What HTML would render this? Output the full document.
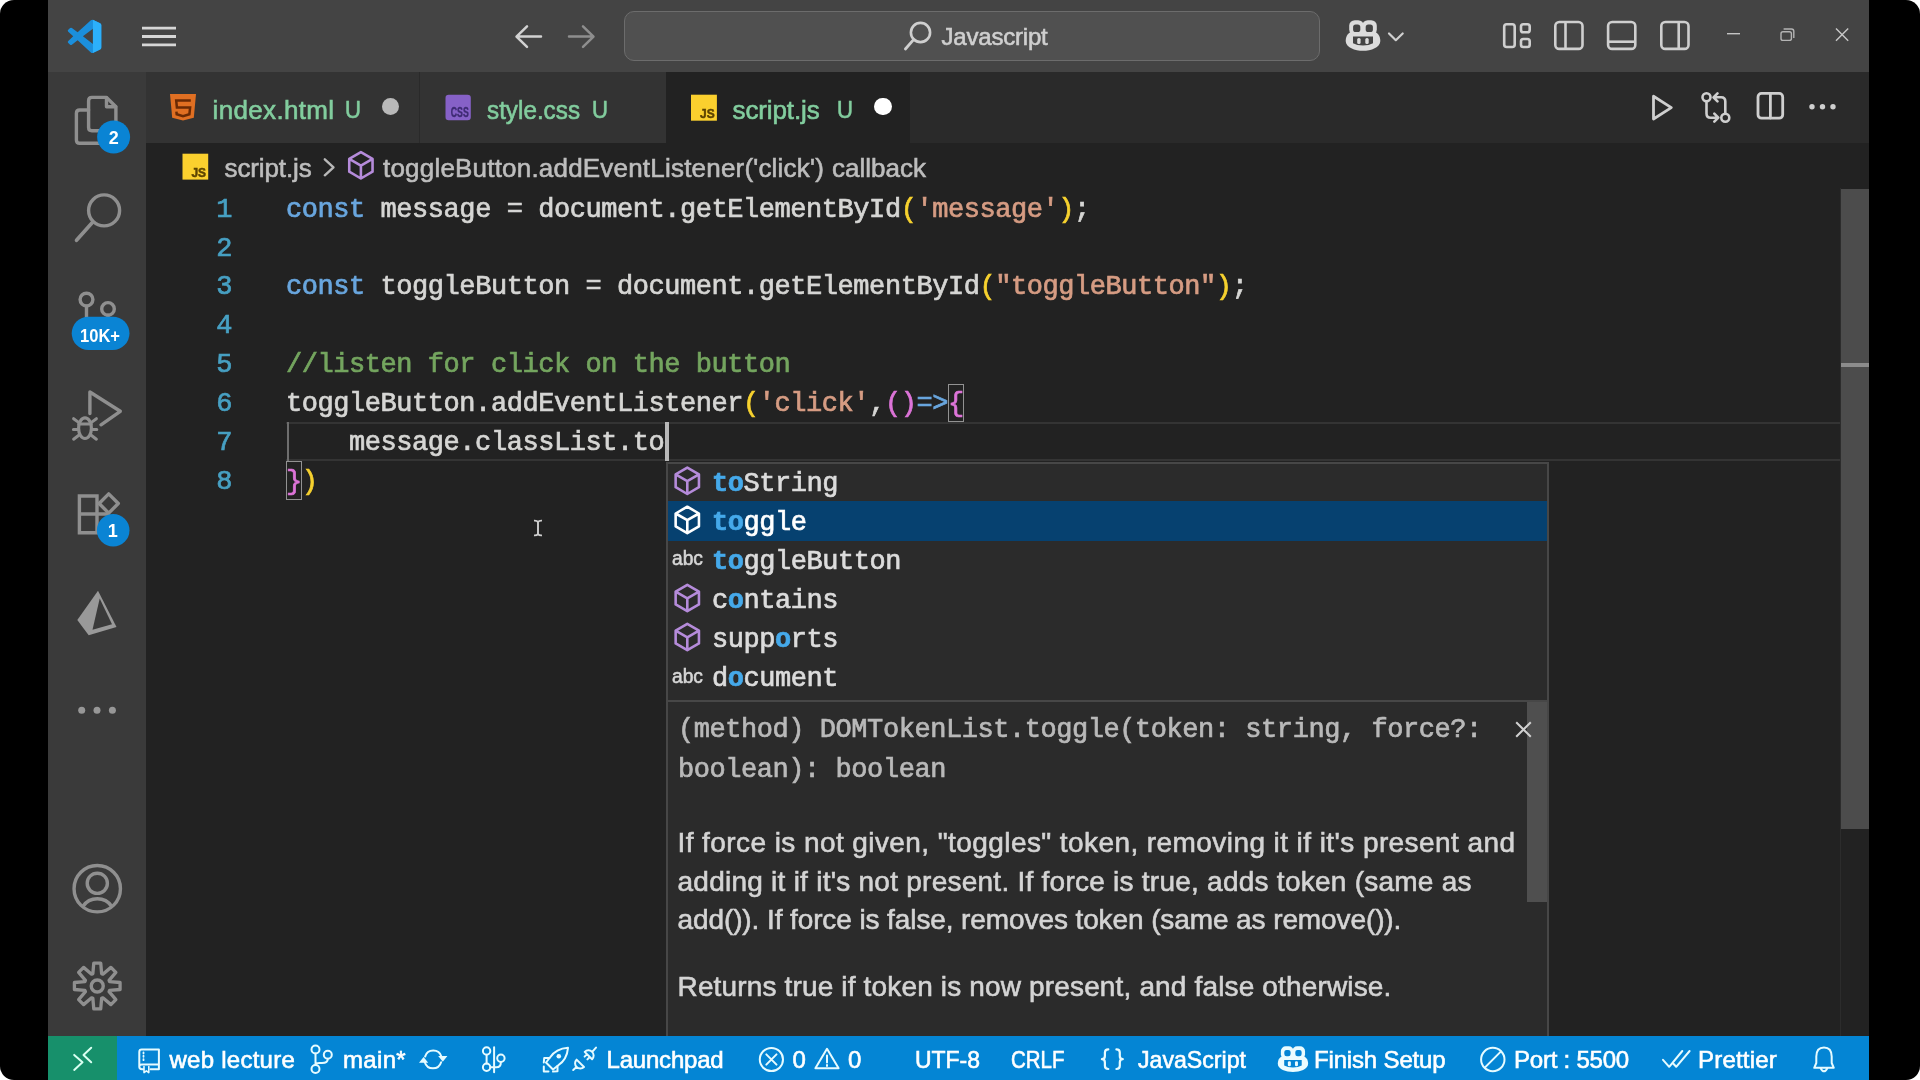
<!DOCTYPE html>
<html>
<head>
<meta charset="utf-8">
<style>
*{box-sizing:border-box;margin:0;padding:0}
html,body{width:1920px;height:1080px;overflow:hidden;background:#fff}
body{font-family:"Liberation Sans",sans-serif;position:relative}
.abs{position:absolute}
#frame{position:absolute;left:0;top:0;width:1920px;height:1080px;background:#000;border-radius:14px;overflow:hidden}
#win{position:absolute;left:48px;top:0;width:1821px;height:1080px;background:#222222;overflow:hidden}
/* all children of #win are positioned in page coords via #pg */
#pg{position:absolute;left:-48px;top:0;width:1920px;height:1080px;will-change:transform}
#title{left:48px;top:0;width:1821px;height:72px;background:#444444}
#act{left:48px;top:72px;width:98px;height:964px;background:#3a3a3a}
#tabs{left:146px;top:72px;width:1723px;height:71px;background:#2a2a2a}
.tab{position:absolute;top:72px;height:71px;background:#333333}
.tab.active{background:#222222}
.t{position:absolute;white-space:pre;line-height:1;transform-origin:0 50%;-webkit-text-stroke:0.6px currentColor}
.tl{font-size:26px;color:#82cd9e}
.bc{font-size:26px;color:#bdbdbd}
#status{left:48px;top:1036px;width:1821px;height:44px;background:#0485d4}
#remote{left:48px;top:1036px;width:69px;height:44px;background:#17906b}
.st{top:1048.4px;font-size:24px;color:#fff}
.code,.ln,.sg,.dm{position:absolute;white-space:pre;font-family:"Liberation Mono",monospace;font-size:27px;line-height:1;letter-spacing:-0.443px}
.code,.ln,.sg,.dm{-webkit-text-stroke:0.7px currentColor}
.code{color:#d6d6d4;left:286px}
.ln{color:#47a0c3;left:200px;width:32px;text-align:right}
.sg{color:#dcdcdc;left:712px}
.sg b{color:#45a9ea;font-weight:700}
.dm{color:#b9b9b9;left:678px}
.doc{left:677.5px;font-size:28px;color:#d4d4d4}
.k{color:#69a6de}.s{color:#d69c83}.c{color:#74a55f}.y{color:#f7d22f}.p{color:#dd74d8}
svg{position:absolute;overflow:visible}
</style>
</head>
<body>
<div id="frame">
<div id="win"><div id="pg">

<!-- TITLE BAR -->
<div id="title" class="abs"></div>
<div class="abs" style="left:623.6px;top:11.2px;width:696.4px;height:49.6px;background:#505050;border:1.6px solid #6c6c6c;border-radius:10px"></div>
<div class="t tt" style="left:941.5px;top:25.3px;font-size:24px;color:#cfcfcf;letter-spacing:-0.2px">Javascript</div>

<!-- ACTIVITY BAR -->
<div id="act" class="abs"></div>

<!-- TABS -->
<div id="tabs" class="abs"></div>
<div class="tab" style="left:146px;width:273px"></div>
<div class="tab" style="left:420px;width:246px"></div>
<div class="tab active" style="left:666px;width:244px"></div>
<div class="t tl" style="left:212.6px;top:96.7px;letter-spacing:0.33px">index.html</div>
<div class="t tl" style="left:345px;top:98.4px;font-size:24px;transform:scaleX(.92)">U</div>
<div class="abs" style="left:381.7px;top:98px;width:17.4px;height:17.4px;border-radius:50%;background:#b9b9b9"></div>
<div class="t tl" style="left:487px;top:96.7px;transform:scaleX(.933)">style.css</div>
<div class="t tl" style="left:591.5px;top:98.4px;font-size:24px;transform:scaleX(.92)">U</div>
<div class="t tl" style="left:732.5px;top:96.7px;letter-spacing:-0.12px">script.js</div>
<div class="t tl" style="left:837px;top:98.4px;font-size:24px;transform:scaleX(.92)">U</div>
<div class="abs" style="left:874px;top:97.7px;width:17.8px;height:17.8px;border-radius:50%;background:#ffffff"></div>

<!-- BREADCRUMBS -->
<div class="t bc" style="left:224.5px;top:155px;letter-spacing:-0.12px">script.js</div>
<div class="t bc" style="left:383px;top:155px;letter-spacing:0.2px">toggleButton.addEventListener('click')</div>
<div class="t bc" style="left:832px;top:155px">callback</div>

<!-- EDITOR -->
<div id="editor">
<!-- current line -->
<div class="abs" style="left:286px;top:422.4px;width:1555px;height:38.9px;border-top:2.5px solid #343434;border-bottom:2.5px solid #343434"></div>
<div class="abs" style="left:286.5px;top:422.4px;width:2px;height:38.9px;background:#6e6e6e"></div>
<!-- bracket match boxes -->
<div class="abs" style="left:947.8px;top:383.5px;width:16.4px;height:38.9px;border:1.8px solid #929292"></div>
<div class="abs" style="left:286px;top:461.3px;width:16.2px;height:38.9px;border:1.8px solid #929292"></div>
<div class="ln" style="top:196.6px">1</div>
<div class="ln" style="top:235.5px">2</div>
<div class="ln" style="top:274.4px">3</div>
<div class="ln" style="top:313.3px">4</div>
<div class="ln" style="top:352.2px">5</div>
<div class="ln" style="top:391.1px">6</div>
<div class="ln" style="top:430px">7</div>
<div class="ln" style="top:468.9px">8</div>
<div class="code" style="top:196.6px"><span class="k">const</span> message = document.getElementById<span class="y">(</span><span class="s">'message'</span><span class="y">)</span>;</div>
<div class="code" style="top:274.4px"><span class="k">const</span> toggleButton = document.getElementById<span class="y">(</span><span class="s">"toggleButton"</span><span class="y">)</span>;</div>
<div class="code" style="top:352.2px"><span class="c">//listen for click on the button</span></div>
<div class="code" style="top:391.1px">toggleButton.addEventListener<span class="y">(</span><span class="s">'click'</span>,<span class="p">()</span><span class="k">=&gt;</span><span class="p">{</span></div>
<div class="code" style="top:430px">    message.classList.to</div>
<div class="code" style="top:468.9px"><span class="p">}</span><span class="y">)</span></div>
<!-- text cursor -->
<div class="abs" style="left:665.3px;top:422px;width:4.2px;height:39px;background:#b8b8b8"></div>
<!-- scrollbar -->
<div class="abs" style="left:1840px;top:188px;width:1px;height:848px;background:#2c2c2c"></div>
<div class="abs" style="left:1840.5px;top:188.7px;width:28.5px;height:640.5px;background:#4c4c4c"></div>
<div class="abs" style="left:1841px;top:363px;width:28px;height:3.8px;background:#8c8c8c"></div>
<!-- mouse I-beam -->
<svg style="left:533px;top:519px" width="10" height="18" viewBox="0 0 10 18"><path d="M1 1.6 Q4 1.4 5 3 Q6 1.4 9 1.6 M1 16.4 Q4 16.6 5 15 Q6 16.6 9 16.4 M5 2.5 V15.5" stroke="#cfcfcf" stroke-width="1.9" fill="none"/></svg>
</div>

<!-- SUGGEST -->
<div id="suggest">
<div class="abs" style="left:665.6px;top:461.6px;width:883px;height:580px;background:#2b2b2b;border:2px solid #474747"></div>
<div class="abs" style="left:667.6px;top:501.3px;width:879px;height:39.3px;background:#064170"></div>
<div class="abs" style="left:667.6px;top:699.6px;width:879px;height:2px;background:#474747"></div>
<div class="sg" style="top:470.6px"><b>to</b>String</div>
<div class="sg" style="top:509.8px;color:#fff"><b>to</b>ggle</div>
<div class="sg" style="top:548.8px"><b>to</b>ggleButton</div>
<div class="sg" style="top:588.0px">c<b>o</b>ntains</div>
<div class="sg" style="top:626.8px">supp<b>o</b>rts</div>
<div class="sg" style="top:666.3px">d<b>o</b>cument</div>
<div class="t" style="left:671.5px;top:665.8px;font-size:20px;color:#d6d6d6;transform:scaleX(.96)">abc</div>
<div class="t" style="left:671.5px;top:548.3px;font-size:20px;color:#d6d6d6;transform:scaleX(.96)">abc</div>
<!-- details -->
<div class="dm" style="top:717.2px">(method) DOMTokenList.toggle(token: string, force?:</div>
<div class="dm" style="top:756.5px">boolean): boolean</div>
<div class="t doc" style="top:829.2px;letter-spacing:0.42px">If force is not given, "toggles" token, removing it if it's present and</div>
<div class="t doc" style="top:867.5px;letter-spacing:0.25px">adding it if it's not present. If force is true, adds token (same as</div>
<div class="t doc" style="top:905.9px;letter-spacing:-0.1px">add()). If force is false, removes token (same as remove()).</div>
<div class="t doc" style="top:973px;letter-spacing:0.155px">Returns true if token is now present, and false otherwise.</div>
<div class="abs" style="left:1527px;top:701.6px;width:19.6px;height:200px;background:#4f4f4f"></div>
<svg style="left:1514.5px;top:720.5px" width="17" height="17" viewBox="0 0 17 17"><path d="M1.2 1.2 L15.8 15.8 M15.8 1.2 L1.2 15.8" stroke="#d0d0d0" stroke-width="2" fill="none"/></svg>
</div>


<!-- ICONS LAYER 1: title / tabs / breadcrumbs -->
<svg id="ic1" style="left:0;top:0" width="1920" height="1080" viewBox="0 0 1920 1080" fill="none">
<!-- vscode logo -->
<g transform="translate(67.8,19.6) scale(1.396)">
<path fill="#1b8fdc" d="M23.15 2.587L18.21.21a1.494 1.494 0 0 0-1.705.29l-9.46 8.63-4.12-3.128a.999.999 0 0 0-1.276.057L.327 7.261A1 1 0 0 0 .326 8.74L3.899 12 .326 15.26a1 1 0 0 0 .001 1.479L1.65 17.94a.999.999 0 0 0 1.276.057l4.12-3.128 9.46 8.63a1.492 1.492 0 0 0 1.704.29l4.942-2.377A1.5 1.5 0 0 0 24 20.06V3.939a1.5 1.5 0 0 0-.85-1.352zm-5.146 14.861L10.826 12l7.178-5.448v10.896z"/>
<path fill="#2cb0fb" d="M18.004 .12 L23.15 2.587 A1.5 1.5 0 0 1 24 3.939 V20.06 A1.5 1.5 0 0 1 23.15 21.413 L18.004 23.88 Z"/>
</g>
<!-- hamburger -->
<path d="M142 28.2H176M142 36.5H176M142 44.8H176" stroke="#d6d6d6" stroke-width="2.8"/>
<!-- back / forward -->
<path d="M541 36.6H517M527 26.3L516.5 36.6L527 46.9" stroke="#d2d2d2" stroke-width="2.5" stroke-linejoin="round" stroke-linecap="round"/>
<path d="M569 36.6H593M583 26.3L593.5 36.6L583 46.9" stroke="#8e8e8e" stroke-width="2.5" stroke-linejoin="round" stroke-linecap="round"/>
<!-- search in command center -->
<circle cx="920.5" cy="32.5" r="9.6" stroke="#cfcfcf" stroke-width="2.6"/>
<path d="M913.6 39.6L905.4 49" stroke="#cfcfcf" stroke-width="2.8" stroke-linecap="round"/>
<!-- copilot (title) -->
<g>
<path fill="#dcdcdc" d="M1345.700 41C1345.700 35.500 1349 32.700 1351.500 31.600L1374.500 31.600C1377 32.700 1380.300 35.500 1380.300 41C1380.300 47.500 1371 50.800 1363 50.800C1355 50.800 1345.700 47.500 1345.700 41Z"/>
<rect x="1349.200" y="20.200" width="14.600" height="15" rx="5.600" fill="#dcdcdc"/>
<rect x="1362.200" y="20.200" width="14.600" height="15" rx="5.600" fill="#dcdcdc"/>
<rect x="1353.100" y="24.500" width="7.200" height="7.600" rx="2.600" fill="#444444"/>
<rect x="1365.700" y="24.500" width="7.200" height="7.600" rx="2.600" fill="#444444"/>
<path fill="#444444" d="M1353 36.600H1373V43.200Q1369 45.400 1363 45.400Q1357 45.400 1353 43.200Z"/>
<rect x="1357.200" y="38" width="3.400" height="6" rx="1.500" fill="#dcdcdc"/>
<rect x="1365.300" y="38" width="3.400" height="6" rx="1.500" fill="#dcdcdc"/>
</g>
<path d="M1389 33.5L1395.800 40.200L1402.700 33.500" stroke="#d0d0d0" stroke-width="2.200" stroke-linecap="round" stroke-linejoin="round"/>
<!-- layout icons -->
<g stroke="#cfcfcf" stroke-width="2.600">
<rect x="1504.200" y="24.200" width="10.500" height="22.800" rx="2.500"/>
<rect x="1521" y="24.200" width="8.700" height="8" rx="2.300"/>
<rect x="1521" y="39" width="8.700" height="8" rx="2.300"/>
<rect x="1555.300" y="22" width="27.200" height="26.900" rx="4"/><path d="M1565.500 22V49"/>
<rect x="1608.100" y="22" width="27.200" height="26.900" rx="4"/><path d="M1608 41.700H1635.500"/>
<rect x="1661.300" y="22" width="27.200" height="26.900" rx="4"/><path d="M1678.700 22V49"/>
</g>
<!-- window controls -->
<path d="M1727 33.700H1740" stroke="#c4c4c4" stroke-width="1.400"/>
<rect x="1781" y="31.800" width="10.400" height="8.600" rx="2" stroke="#b4b4b4" stroke-width="1.400"/>
<path d="M1783.600 29H1791.500Q1793.800 29 1793.800 31.300V38" stroke="#b4b4b4" stroke-width="1.400"/>
<path d="M1836 28.400L1848.200 40.800M1848.200 28.400L1836 40.800" stroke="#c8c8c8" stroke-width="1.400"/>

<!-- file icons: html -->
<g id="i-html">
<path fill="#e06f22" d="M170 94H196L193.800 117.800L183 120.400L172.200 117.800Z"/>
<path d="M190.800 100.600H176.200L176.900 107.600H190.100L189.400 114.300L183 116.200L176.700 114.300L176.400 111.600" stroke="#6a2a04" stroke-width="2.500" fill="none"/>
</g>
<!-- css -->
<rect x="445.500" y="94.800" width="25.300" height="25.400" rx="3.200" fill="#8661c7"/>
<text x="450.800" y="117.400" font-family="Liberation Sans" font-weight="700" font-size="14.500" textLength="18" lengthAdjust="spacingAndGlyphs" fill="#3d2a72" stroke="#3d2a72" stroke-width=".4">CSS</text>
<!-- js (tab) -->
<rect x="691" y="94.700" width="25.900" height="26" fill="#fbd02e"/>
<text x="700" y="117.900" font-family="Liberation Sans" font-weight="700" font-size="13.400" textLength="14.600" lengthAdjust="spacingAndGlyphs" fill="#5c4300" stroke="#5c4300" stroke-width=".5">JS</text>
<!-- js (breadcrumb) -->
<rect x="182.500" y="153.700" width="25.700" height="25.900" fill="#fbd02e"/>
<text x="191.400" y="176.700" font-family="Liberation Sans" font-weight="700" font-size="13.400" textLength="14.600" lengthAdjust="spacingAndGlyphs" fill="#5c4300" stroke="#5c4300" stroke-width=".5">JS</text>
<!-- breadcrumb chevron -->
<path d="M324.800 159.300L333.500 167.300L324.800 175.300" stroke="#b8b8b8" stroke-width="2.400" stroke-linecap="round" stroke-linejoin="round"/>
<!-- cube symbol def -->
<defs><g id="cube"><path d="M0 -13.200L11.650 -6.400V6.400L0 13.200L-11.650 6.400V-6.400ZM-11.650 -6.400L0 .300L11.650 -6.400M0 .300V13.200" stroke-width="2.600" stroke-linejoin="round" fill="none"/></g></defs>
<use href="#cube" x="360.900" y="165.300" stroke="#b58bda"/>
<!-- editor actions -->
<path d="M1653.500 96.300V119L1671.300 107.600Z" stroke="#cfcfcf" stroke-width="2.800" stroke-linejoin="round"/>
<g stroke="#cfcfcf" stroke-width="2.600" stroke-linecap="round" stroke-linejoin="round">
<circle cx="1706.500" cy="97.300" r="4"/><circle cx="1725.300" cy="117.700" r="4"/>
<path d="M1706.500 101.500V113.500Q1706.500 117.700 1710.700 117.700H1717.500M1714.300 113.700L1718.300 117.700L1714.300 121.700"/>
<path d="M1725.300 113.500V101.500Q1725.300 97.300 1721.100 97.300H1714.300M1717.500 93.300L1713.500 97.300L1717.500 101.300"/>
<rect x="1758" y="93.400" width="24.700" height="24.800" rx="3.500" stroke-width="2.800"/><path d="M1770.400 93.500V118" stroke-width="2.800"/>
</g>
<g fill="#cfcfcf"><circle cx="1812" cy="106.700" r="2.700"/><circle cx="1822.500" cy="106.700" r="2.700"/><circle cx="1833" cy="106.700" r="2.700"/></g>
</svg>


<!-- ICONS LAYER 2: activity bar -->
<svg id="ic2" style="left:0;top:0" width="1920" height="1080" viewBox="0 0 1920 1080" fill="none">
<g stroke="#8f8f8f" stroke-width="3.400" stroke-linejoin="round" stroke-linecap="round">
<!-- files -->
<path d="M88.600 127.500V100.700Q88.600 97.400 91.900 97.400H106.500L115.900 106.800V127.500Q115.900 130.700 112.600 130.700H91.900Q88.600 130.700 88.600 127.500Z"/>
<path d="M106.500 97.600V106.800H115.700"/>
<path d="M88.600 110H79.700Q76.400 110 76.400 113.300V140Q76.400 143.300 79.700 143.300H101"/>
<!-- search -->
<circle cx="104.100" cy="210.400" r="15.500"/>
<path d="M92.800 222L76.500 240.300" stroke-width="3.600"/>
<!-- source control -->
<circle cx="86.500" cy="299.600" r="6.400"/><circle cx="108" cy="308.900" r="6.300"/>
<path d="M86.500 306.200V320M108 315.300V320"/>
<!-- run and debug -->
<path d="M89.900 413.500V392L120.300 411.300L101 424.800"/>
<ellipse cx="85" cy="428.200" rx="6.400" ry="10.300" stroke-width="3.200"/>
<path d="M78.800 424H91.200M73.400 429.600H78M92 429.600H96.800M73.600 418.700L78.600 422.400M96.400 418.700L91.400 422.400M73.600 439.200L78.800 435.200M96.400 439.200L91.200 435.200" stroke-width="3"/>
<!-- extensions -->
<path d="M79.400 496H97V532.800H79.400ZM79.400 514H108.500M97 532.800H104" stroke-linejoin="miter"/>
<path d="M108.700 493.900L118.300 503.500L108.700 513.100L99.100 503.500Z"/>
</g>
<!-- prisma pyramid -->
<path d="M98 590.700L77.300 620L88.700 635.200L116.500 627Z" fill="#999"/>
<path d="M99.700 598.500L112 624.200L92.500 629.800Z" fill="#3a3a3a"/>
<!-- ellipsis -->
<g fill="#979797"><circle cx="81.700" cy="710.200" r="3.500"/><circle cx="97" cy="710.200" r="3.500"/><circle cx="112.400" cy="710.200" r="3.500"/></g>
<!-- account -->
<g stroke="#8f8f8f" stroke-width="3.400">
<circle cx="97.250" cy="888.700" r="23.200"/>
<circle cx="97.300" cy="883.300" r="10.100"/>
<path d="M82.800 906.500A17.500 17.500 0 0 1 111.800 906.500"/>
</g>
<!-- gear -->
<path d="M92.88 973.65L93.76 963.17L100.74 963.17L101.62 973.65L102.89 974.18L110.93 967.38L115.87 972.32L109.07 980.36L109.60 981.63L120.08 982.51L120.08 989.49L109.60 990.37L109.07 991.64L115.87 999.68L110.93 1004.62L102.89 997.82L101.62 998.35L100.74 1008.83L93.76 1008.83L92.88 998.35L91.61 997.82L83.57 1004.62L78.63 999.68L85.43 991.64L84.90 990.37L74.42 989.49L74.42 982.51L84.90 981.63L85.43 980.36L78.63 972.32L83.57 967.38L91.61 974.18Z" stroke="#8f8f8f" stroke-width="3.300" stroke-linejoin="round"/>
<circle cx="97.250" cy="986" r="6" stroke="#8f8f8f" stroke-width="3.400"/>
<!-- badges -->
<circle cx="113.600" cy="137" r="16.500" fill="#0a84d4"/>
<rect x="71.700" y="316.700" width="57.800" height="33.300" rx="16.650" fill="#0a84d4"/>
<circle cx="113.200" cy="530.200" r="16.300" fill="#0a84d4"/>
<g font-family="Liberation Sans" font-weight="700" font-size="18" fill="#fff">
<text x="108.700" y="143.700">2</text>
<text x="80" y="341.600" textLength="40" lengthAdjust="spacingAndGlyphs">10K+</text>
<text x="107.800" y="536.600">1</text>
</g>
</svg>

<!-- STATUS BAR -->
<div id="status" class="abs"></div>
<div id="remote" class="abs"></div>
<div class="t st" style="left:169.5px;letter-spacing:0.25px">web lecture</div>
<div class="t st" style="left:343px;letter-spacing:0.33px">main*</div>
<div class="t st" style="left:606.5px;letter-spacing:-0.2px">Launchpad</div>
<div class="t st" style="left:792.5px">0</div>
<div class="t st" style="left:848px">0</div>
<div class="t st" style="left:914.5px;transform:scaleX(.956)">UTF-8</div>
<div class="t st" style="left:1010.5px;transform:scaleX(.853)">CRLF</div>
<div class="t st" style="left:1138px;transform:scaleX(.964)">JavaScript</div>
<div class="t st" style="left:1314px;letter-spacing:-0.16px">Finish Setup</div>
<div class="t st" style="left:1514px;letter-spacing:-0.22px">Port : 5500</div>
<div class="t st" style="left:1698px;letter-spacing:0.2px">Prettier</div>


<!-- ICONS LAYER 3: suggest + status -->
<svg id="ic3" style="left:0;top:0" width="1920" height="1080" viewBox="0 0 1920 1080" fill="none">
<use href="#cube" x="687.300" y="480.800" stroke="#b58bda"/>
<use href="#cube" x="687.300" y="519.900" stroke="#ffffff"/>
<use href="#cube" x="687.300" y="598" stroke="#b58bda"/>
<use href="#cube" x="687.300" y="637" stroke="#b58bda"/>
<g stroke="#e6fbff" stroke-width="2" stroke-linecap="round" stroke-linejoin="round">
<!-- remote -->
<path d="M91.200 1047.700L83.500 1054.900L91.200 1062.200M74.200 1054.900L82.500 1062.300L74.200 1069.900" stroke="#d9fff1"/>
<!-- repo -->
<path d="M139.300 1067V1052Q139.300 1049.600 141.700 1049.600H158.900V1069.200H150.500M143.300 1069.200H142Q139.300 1069.200 139.300 1066.800Q139.300 1064.600 142 1064.600H158.500"/>
<path d="M144 1066.500V1072.600L146.400 1070.800L148.800 1072.600V1066.500" stroke-width="1.600"/>
<path d="M143.500 1052.300V1053.400M143.500 1055.700V1056.800M143.500 1059.100V1060.200" stroke-width="1.800"/>
<!-- branch -->
<circle cx="315.500" cy="1049.500" r="4"/><circle cx="315.500" cy="1069" r="4"/><circle cx="327.800" cy="1054.800" r="4"/>
<path d="M315.500 1053.500V1065M327.800 1058.800Q327.800 1063 322 1063H319.500Q315.500 1063 315.500 1065"/>
<!-- sync -->
<path d="M425.100 1056.600A8.500 8.500 0 0 1 441.400 1056.600M441.100 1062.200A8.500 8.500 0 0 1 424.800 1062.200"/>
<path d="M438.200 1056.100H447.400L442.800 1061.800ZM419 1062.700H428.200L423.600 1057Z" fill="#e6fbff" stroke="none"/>
<!-- git graph -->
<circle cx="486.600" cy="1051" r="3.700"/><circle cx="486.600" cy="1067.300" r="3.700"/><circle cx="500.900" cy="1058.200" r="3.700"/>
<path d="M486.600 1054.700V1063.600M494.100 1047.300V1072.300M490.300 1067.300H496.500Q500.900 1067.300 500.900 1062"/>
<!-- rocket -->
<path d="M568 1047.800Q556 1048.500 550 1057.500L546 1062.500L553 1069.500L558 1065.500Q567 1059.500 568 1047.800Z"/>
<path d="M549.500 1058H544.200L543.800 1062.500M557.500 1066V1071.200L553 1071.600M543.800 1066.500V1071.600H548.500"/>
<circle cx="558.800" cy="1056.200" r="2.300" fill="#e6fbff" stroke="none"/>
<!-- plug -->
<path d="M584.700 1051.900L592.100 1059.300A5.230 5.230 0 0 0 584.700 1051.900ZM592.200 1051.800L596 1047.600M586.800 1054.400L584.600 1056.600M589.600 1057.200L587.400 1059.400"/>
<path d="M576.600 1059.600L584 1067A5.230 5.230 0 0 1 576.600 1059.600ZM576.500 1067.100L573.200 1070"/>
<!-- error / warning -->
<circle cx="771.400" cy="1059.500" r="11.600"/><path d="M766.300 1054.400L776.500 1064.600M776.500 1054.400L766.300 1064.600"/>
<path d="M827 1048.800L838.600 1068.200H815.400Z"/><path d="M827 1055.600V1062.400M827 1064.900V1065.900"/>
<!-- braces -->
<path d="M1108.300 1049.400Q1104.900 1049.400 1104.900 1052.600V1056Q1104.900 1059.200 1101.900 1059.200Q1104.900 1059.200 1104.900 1062.400V1065.800Q1104.900 1069 1108.300 1069M1116.400 1049.400Q1119.800 1049.400 1119.800 1052.600V1056Q1119.800 1059.200 1122.800 1059.200Q1119.800 1059.200 1119.800 1062.400V1065.800Q1119.800 1069 1116.400 1069" stroke-width="2.200"/>
<!-- port -->
<circle cx="1492.800" cy="1059.500" r="11.700"/><path d="M1501 1051.400L1484.800 1067.600"/>
<!-- checks -->
<path d="M1663 1059.800L1669.200 1066.800L1682.300 1051M1672.700 1063L1676.200 1066.800L1689.600 1051"/>
<!-- bell -->
<path d="M1814.200 1067.800H1833.800L1831.700 1063V1056.600Q1831.700 1047.400 1824 1047.400Q1816.300 1047.400 1816.300 1056.600V1063ZM1820.600 1068.200Q1824 1074.400 1827.400 1068.200"/>
</g>
<!-- copilot (status) -->
<g transform="translate(98.97,1029.33) scale(0.876,0.84)">
<path fill="#eafcff" d="M1345.700 41C1345.700 35.500 1349 32.700 1351.500 31.600L1374.500 31.600C1377 32.700 1380.300 35.500 1380.300 41C1380.300 47.500 1371 50.800 1363 50.800C1355 50.800 1345.700 47.500 1345.700 41Z"/>
<rect x="1349.200" y="20.200" width="14.600" height="15" rx="5.600" fill="#eafcff"/>
<rect x="1362.200" y="20.200" width="14.600" height="15" rx="5.600" fill="#eafcff"/>
<rect x="1353.100" y="24.500" width="7.200" height="7.600" rx="2.600" fill="#0485d4"/>
<rect x="1365.700" y="24.500" width="7.200" height="7.600" rx="2.600" fill="#0485d4"/>
<path fill="#0485d4" d="M1353 36.600H1373V43.200Q1369 45.400 1363 45.400Q1357 45.400 1353 43.200Z"/>
<rect x="1357.200" y="38" width="3.400" height="6" rx="1.500" fill="#eafcff"/>
<rect x="1365.300" y="38" width="3.400" height="6" rx="1.500" fill="#eafcff"/>
</g>
</svg>

</div></div>
</div>
</body>
</html>
